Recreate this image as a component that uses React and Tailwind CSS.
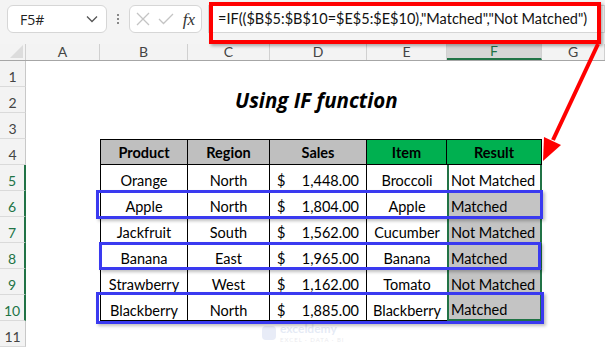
import React from "react";

const cols = ["A", "B", "C", "D", "E", "F", "G"];
const gridCols = "grid grid-cols-[26px_74px_88px_82px_97px_80px_95px_63px] h-[26px]";

const data = [
  ["Orange", "North", "1,448.00", "Broccoli", "Not Matched"],
  ["Apple", "North", "1,804.00", "Apple", "Matched"],
  ["Jackfruit", "South", "1,562.00", "Cucumber", "Not Matched"],
  ["Banana", "East", "1,965.00", "Banana", "Matched"],
  ["Strawberry", "West", "1,162.00", "Tomato", "Not Matched"],
  ["Blackberry", "North", "1,885.00", "Blackberry", "Matched"],
];

const font = { fontFamily: "Lato, 'Open Sans', sans-serif" };

function RowHead({ n, active }) {
  return (
    <div
      className={
        "h-[26px] flex items-center justify-center pt-[7px] bg-[#f3f3f3] border-b border-[#dadada] text-[14px] leading-none " +
        (active
          ? "text-[#217346] border-r-2 border-r-[#217346]"
          : "text-[#444] border-r border-r-[#c8c8c8]")
      }
    >
      {n}
    </div>
  );
}

export default function App() {
  return (
    <div
      className="relative w-[605px] h-[350px] overflow-hidden bg-white text-black"
      style={font}
    >
      {/* formula bar */}
      <div className="h-[44px] bg-[#f4f4f4] flex items-start pt-[5px] pl-[7px]">
        <div className="w-[100px] h-[28px] bg-white border border-[#d6d6d6] rounded-md flex items-center justify-between pl-[12px] pr-[8px] text-[14px] text-[#222]">
          <span style={{ fontFamily: "'Open Sans', sans-serif" }}>F5#</span>
          <svg width="12" height="8" viewBox="0 0 12 8">
            <path d="M1 1.5 L6 6.5 L11 1.5" fill="none" stroke="#555" strokeWidth="1.3" />
          </svg>
        </div>
        <div className="w-[22px] h-[28px] flex flex-col items-center justify-center gap-[2px]">
          <span className="w-[2px] h-[2px] bg-[#888]" />
          <span className="w-[2px] h-[2px] bg-[#888]" />
          <span className="w-[2px] h-[2px] bg-[#888]" />
        </div>
        <div className="w-[73px] h-[28px] bg-white border border-[#d6d6d6] rounded-md flex items-center justify-between px-[6px]">
          <svg width="14" height="14" viewBox="0 0 14 14">
            <path d="M1 1 L13 13 M13 1 L1 13" stroke="#c4c4c4" strokeWidth="1.3" />
          </svg>
          <svg width="16" height="12" viewBox="0 0 16 12">
            <path d="M1 6 L5.5 10.5 L15 1" fill="none" stroke="#c4c4c4" strokeWidth="1.3" />
          </svg>
          <span
            className="text-[17px] italic text-[#333] leading-none"
            style={{ fontFamily: "'Liberation Serif', serif" }}
          >
            fx
          </span>
        </div>
        <div className="ml-[6px] flex-1 h-[28px] bg-white border border-[#d6d6d6] flex items-center pl-[9px] text-[14.5px] text-[#111] whitespace-nowrap">
          =IF(($B$5:$B$10=$E$5:$E$10),"Matched","Not Matched")
        </div>
      </div>

      {/* column headers */}
      <div className="grid grid-cols-[26px_74px_88px_82px_97px_80px_95px_63px] h-[17px] bg-[#f3f3f3] border-b border-[#a6a6a6] text-[14px]">
        <div className="relative border-r border-[#d0d0d0]">
          <svg className="absolute left-[10px] top-[1px]" width="13" height="13" viewBox="0 0 13 13">
            <path d="M13 0 L13 13 L0 13 Z" fill="#dcdcdc" />
          </svg>
        </div>
        {cols.map((c) => (
          <div
            key={c}
            className={
              "flex items-center justify-center leading-none " +
              (c === "F"
                ? "bg-[#d6d6d6] text-[#217346] border-b-2 border-[#217346] border-r border-r-[#d0d0d0]"
                : "text-[#444] border-r border-[#d0d0d0]")
            }
          >
            {c}
          </div>
        ))}
      </div>

      {/* rows 1-3 */}
      {[1, 2, 3].map((n) => (
        <div key={n} className={gridCols}>
          <RowHead n={n} />
          {n === 2 ? (
            <div className="col-span-7 flex items-center">
              <span
                className="ml-[209px] text-[20.5px] leading-none font-bold italic whitespace-nowrap"
                style={{ fontFamily: "'Open Sans', Lato, sans-serif" }}
              >
                Using IF function
              </span>
            </div>
          ) : (
            <div className="col-span-7" />
          )}
        </div>
      ))}

      {/* header row 4 */}
      <div className={gridCols + " text-[14.5px] leading-none"}>
        <RowHead n={4} />
        <div />
        <div className="bg-[#bfbfbf] border border-black flex items-center justify-center pt-[2px] font-bold">Product</div>
        <div className="bg-[#bfbfbf] border-y border-r border-black flex items-center justify-center pt-[2px] font-bold">Region</div>
        <div className="bg-[#bfbfbf] border-y border-r border-black flex items-center justify-center pt-[2px] font-bold">Sales</div>
        <div className="bg-[#00b050] border-y border-r border-black flex items-center justify-center pt-[2px] font-bold">Item</div>
        <div className="bg-[#00b050] border-y border-r border-black flex items-center justify-center pt-[2px] font-bold">Result</div>
        <div />
      </div>

      {/* data rows */}
      {data.map((r, i) => {
        const last = i === data.length - 1;
        const first = i === 0;
        return (
          <div key={i} className={gridCols + " text-[14.5px] leading-none"}>
            <RowHead n={i + 5} active />
            <div />
            <div className="border-x border-b border-black flex items-center justify-center pt-[7px] whitespace-nowrap">{r[0]}</div>
            <div className="border-r border-b border-black flex items-center justify-center pt-[7px]">{r[1]}</div>
            <div className="border-r border-b border-black flex items-center justify-between pt-[7px] pl-[7px] pr-[7px]">
              <span>$</span>
              <span>{r[2]}</span>
            </div>
            <div className="border-b border-black flex items-center justify-center pt-[7px] whitespace-nowrap">{r[3]}</div>
            <div
              className={
                "flex items-center pt-[7px] pl-[2px] whitespace-nowrap border-x-2 border-[#217346] " +
                (first ? "bg-white border-b border-b-black " : "bg-[#c4c4c4] border-b border-b-[#9a9a9a] ") +
                (last ? "border-b-2 border-b-[#217346]" : "")
              }
            >
              {r[4]}
            </div>
            <div />
          </div>
        );
      })}

      <div className={gridCols}>
        <RowHead n={11} />
        <div className="col-span-7" />
      </div>

      {/* watermark */}
      <div className="absolute left-[262px] top-[323px] flex items-center gap-[4px] opacity-20 pointer-events-none">
        <div className="w-[14px] h-[14px] bg-[#8fa6d8] rounded-sm" />
        <div className="flex flex-col gap-[2px] leading-none">
          <span className="text-[12px] font-bold text-[#7f9ad0]">exceldemy</span>
          <span className="text-[6px] tracking-[1px] text-[#99a]">EXCEL · DATA · BI</span>
        </div>
      </div>

      {/* blue highlight boxes */}
      <div className="absolute left-[96px] top-[190px] w-[447px] h-[29px] border-[3px] border-[#3a3af0] shadow-[2px_2px_3px_rgba(0,0,0,0.25)]" />
      <div className="absolute left-[99px] top-[242px] w-[442px] h-[28px] border-[3px] border-[#3a3af0] shadow-[2px_2px_3px_rgba(0,0,0,0.25)]" />
      <div className="absolute left-[96px] top-[292px] w-[448px] h-[32px] border-[3px] border-[#3a3af0] shadow-[2px_2px_3px_rgba(0,0,0,0.25)]" />

      {/* red annotation */}
      <div className="absolute left-[209px] top-[2px] w-[392px] h-[42px] border-4 border-[#ff0000] shadow-[2px_2px_3px_rgba(0,0,0,0.3)]" />
      <svg className="absolute left-0 top-0 pointer-events-none" width="605" height="350">
        <line x1="598" y1="44" x2="553" y2="140" stroke="#ff0000" strokeWidth="4" />
        <polygon points="543,161 544,137 561,145" fill="#ff0000" />
      </svg>
    </div>
  );
}
